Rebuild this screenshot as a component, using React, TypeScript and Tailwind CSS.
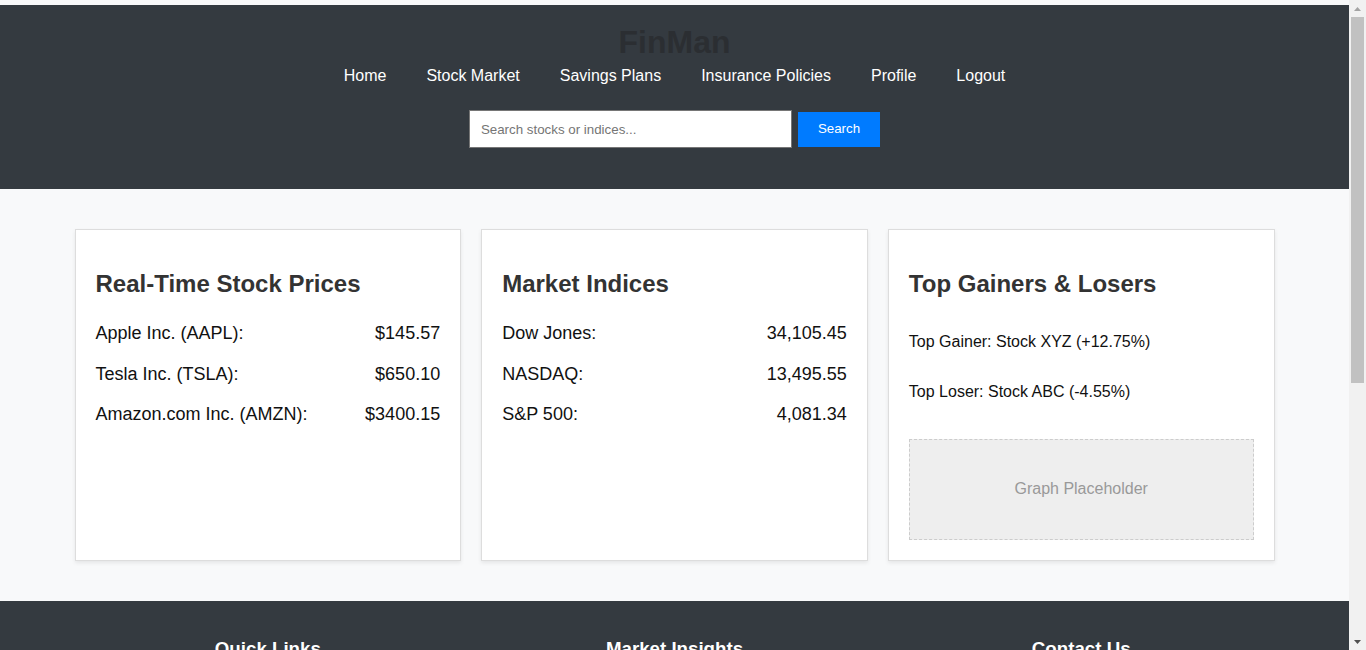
const navLinks = ['Home', 'Stock Market', 'Savings Plans', 'Insurance Policies', 'Profile', 'Logout'];

const stocks = [
  { name: 'Apple Inc. (AAPL):', value: '$145.57' },
  { name: 'Tesla Inc. (TSLA):', value: '$650.10' },
  { name: 'Amazon.com Inc. (AMZN):', value: '$3400.15' },
];

const indices = [
  { name: 'Dow Jones:', value: '34,105.45' },
  { name: 'NASDAQ:', value: '13,495.55' },
  { name: 'S&P 500:', value: '4,081.34' },
];

function Card({ title, children }: { title: string; children: React.ReactNode }) {
  return (
    <section className="flex-1 flex flex-col bg-white border border-[#dddddd] shadow-[0_2px_4px_rgba(0,0,0,0.08)] p-5">
      <h2 className="mt-5 mb-5 text-[24px] leading-[27.6px] font-bold text-[#333333]">{title}</h2>
      {children}
    </section>
  );
}

function PriceList({ rows }: { rows: { name: string; value: string }[] }) {
  return (
    <div className="flex flex-col gap-[10px]">
      {rows.map((r) => (
        <div key={r.name} className="flex justify-between py-[5px] text-[18px] leading-[20.7px] text-[#111111]">
          <span>{r.name}</span>
          <span>{r.value}</span>
        </div>
      ))}
    </div>
  );
}

// classic page scrollbar, drawn since the headless page hides the real one
function Scrollbar() {
  return (
    <div className="w-[17px] shrink-0 bg-[#f1f1f1] flex flex-col items-center">
      <div className="h-[17px] flex items-center justify-center">
        <svg width="7" height="4" viewBox="0 0 7 4">
          <path d="M0 4 L3.5 0 L7 4 Z" fill="#a3a3a3" />
        </svg>
      </div>
      <div className="w-[13px] h-[366px] bg-[#c1c1c1]" />
      <div className="flex-1" />
      <div className="h-[17px] flex items-center justify-center">
        <svg width="7" height="4" viewBox="0 0 7 4">
          <path d="M0 0 L7 0 L3.5 4 Z" fill="#505050" />
        </svg>
      </div>
    </div>
  );
}

export default function App() {
  return (
    <div className="h-screen flex overflow-hidden bg-[#f8f9fa] font-['Liberation_Sans',Arial,sans-serif]">
      <div className="flex-1 min-w-0 overflow-y-auto [scrollbar-width:none] pt-[5px]">
        {/* Header */}
        <header className="bg-[#343a40] pt-[19px] pb-[41px] flex flex-col items-center">
          <h1 className="text-[32px] leading-[36.8px] font-bold text-[#2b2e32]">FinMan</h1>
          <nav className="mt-[6px] flex gap-10 text-[16px] leading-[18.4px] text-white">
            {navLinks.map((l) => (
              <a key={l} href="#" className="hover:underline">
                {l}
              </a>
            ))}
          </nav>
          <form className="mt-[25px] flex items-center gap-[6px]" onSubmit={(e) => e.preventDefault()}>
            <input
              type="text"
              placeholder="Search stocks or indices..."
              className="w-[323px] h-[38px] px-[11px] bg-white border border-[#767676] text-[13.333px] text-black placeholder:text-[#757575] outline-none"
            />
            <button type="submit" className="h-[35px] px-5 bg-[#007bff] text-white text-[13.333px]">
              Search
            </button>
          </form>
        </header>

        {/* Dashboard */}
        <main className="py-10">
          <div className="max-w-[1200px] mx-auto flex gap-5">
            <Card title="Real-Time Stock Prices">
              <PriceList rows={stocks} />
            </Card>
            <Card title="Market Indices">
              <PriceList rows={indices} />
            </Card>
            <Card title="Top Gainers & Losers">
              <p className="mt-[15px] text-[16px] leading-[18.4px] text-[#111111]">Top Gainer: Stock XYZ (+12.75%)</p>
              <p className="mt-[32px] text-[16px] leading-[18.4px] text-[#111111]">Top Loser: Stock ABC (-4.55%)</p>
              <div className="mt-[37px] h-[101px] bg-[#eeeeee] border border-dashed border-[#cccccc] flex items-center justify-center text-[16px] text-[#999999]">
                Graph Placeholder
              </div>
            </Card>
          </div>
        </main>

        {/* Footer */}
        <footer className="bg-[#343a40] pt-[37px] pb-10 text-white">
          <div className="max-w-[1200px] mx-auto flex gap-5 text-center">
            <div className="flex-1">
              <h3 className="text-[18.72px] leading-[21.5px] font-bold mb-4">Quick Links</h3>
              <ul className="flex flex-col gap-2 text-[15px]">
                <li>Home</li>
                <li>Stock Market</li>
                <li>Savings Plans</li>
                <li>Insurance Policies</li>
              </ul>
            </div>
            <div className="flex-1">
              <h3 className="text-[18.72px] leading-[21.5px] font-bold mb-4">Market Insights</h3>
              <ul className="flex flex-col gap-2 text-[15px]">
                <li>Daily Market Report</li>
                <li>Investment Tips</li>
                <li>Economic Calendar</li>
              </ul>
            </div>
            <div className="flex-1">
              <h3 className="text-[18.72px] leading-[21.5px] font-bold mb-4">Contact Us</h3>
              <ul className="flex flex-col gap-2 text-[15px]">
                <li>Email: support@finman.com</li>
                <li>Phone: +1 234 567 890</li>
              </ul>
            </div>
          </div>
          <p className="mt-8 text-center text-[14px] text-[#cccccc]">© 2024 FinMan. All rights reserved.</p>
        </footer>
      </div>
      <Scrollbar />
    </div>
  );
}
